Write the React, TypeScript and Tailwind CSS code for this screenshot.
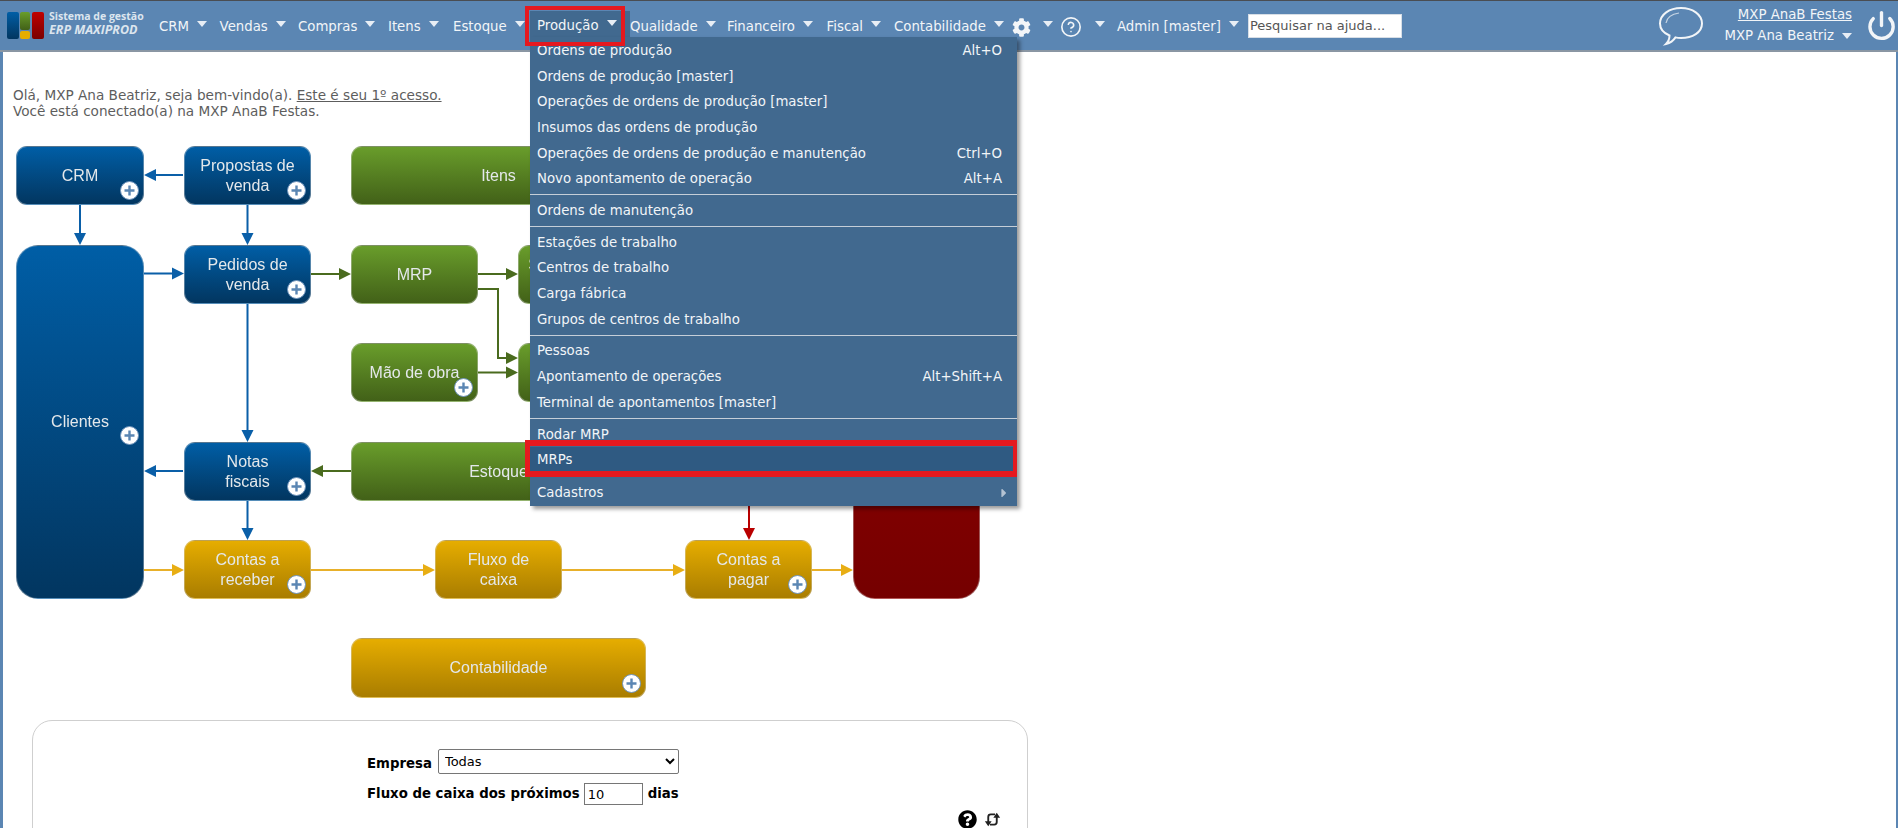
import { FaCog, FaQuestionCircle, FaCaretRight } from "react-icons/fa";
import { CircleHelp, Power } from "lucide-react";

const navItems = [
  { label: "CRM", cls: "w-[60.600px]" },
  { label: "Vendas", cls: "w-[78.400px]" },
  { label: "Compras", cls: "w-[90px]" },
  { label: "Itens", cls: "w-[65px]" },
  { label: "Estoque", cls: "w-[77px]" },
];

const navItemsAfter = [
  { label: "Qualidade", cls: "w-[97px]" },
  { label: "Financeiro", cls: "w-[99.600px]" },
  { label: "Fiscal", cls: "w-[67.400px]" },
  { label: "Contabilidade", cls: "w-[118px]" },
];

type MenuRow = { label: string; shortcut?: string };

const menuGroups: MenuRow[][] = [
  [
    { label: "Ordens de produção", shortcut: "Alt+O" },
    { label: "Ordens de produção [master]" },
    { label: "Operações de ordens de produção [master]" },
    { label: "Insumos das ordens de produção" },
    { label: "Operações de ordens de produção e manutenção", shortcut: "Ctrl+O" },
    { label: "Novo apontamento de operação", shortcut: "Alt+A" },
  ],
  [{ label: "Ordens de manutenção" }],
  [
    { label: "Estações de trabalho" },
    { label: "Centros de trabalho" },
    { label: "Carga fábrica" },
    { label: "Grupos de centros de trabalho" },
  ],
  [
    { label: "Pessoas" },
    { label: "Apontamento de operações", shortcut: "Alt+Shift+A" },
    { label: "Terminal de apontamentos [master]" },
  ],
];

const Caret = () => (
  <span className="mb-[6px] ml-2 inline-block h-0 w-0 border-x-[5px] border-t-[6px] border-x-transparent border-t-[#e8eef5]" />
);

const Plus = ({ cls }: { cls: string }) => (
  <span className={`absolute flex h-[19px] w-[19px] items-center justify-center rounded-full border border-[#6f93bb] bg-white ${cls}`}>
    <svg width="13" height="13" viewBox="0 0 13 13">
      <path d="M6.5 1.5v10M1.5 6.5h10" stroke="#5b86b3" strokeWidth="2.4" />
    </svg>
  </span>
);

const blue = "bg-gradient-to-b from-[#005ea6] to-[#023660]";
const green = "bg-gradient-to-b from-[#699d2b] to-[#426118]";
const orange = "bg-gradient-to-b from-[#e6ad00] to-[#a97d00]";
const red = "bg-gradient-to-b from-[#9a0000] to-[#750000]";

const Box = ({ cls, children }: { cls: string; children?: React.ReactNode }) => (
  <div className={`absolute flex items-center justify-center rounded-[11px] border border-[#d8d8d8]/40 text-center font-['Liberation_Sans',sans-serif] text-[16px] leading-[20px] text-[#e4e8eb] ${cls}`}>
    {children}
  </div>
);

const Arrows = () => (
  <svg className="absolute -left-[3px] top-0" width="1040" height="560" viewBox="0 0 1040 560">
    {/* coordinates relative to the diagram, which starts at page y=140 */}
    <g fill="none" stroke="#0a5fa8" strokeWidth="2">
      <path d="M183 35H150M80 65v34M247.5 65v34M144 133.5h34M247.5 163v133M183 331h-33M247.5 361v33" />
    </g>
    <g fill="#0a5fa8">
      <path d="M144 35l12-6v12zM80 105l-6-12h12zM247.5 105l-6-12h12zM184 133.5l-12-6v12zM247.5 302l-6-12h12zM144 331l12-6v12zM247.5 400l-6-12h12z" />
    </g>
    <g fill="none" stroke="#4a6b1e" strokeWidth="2">
      <path d="M311 134h34M478 134h34M478 149h20v69h14M478 232.500h34M351 331h-34" />
    </g>
    <g fill="#4a6b1e">
      <path d="M351 134l-12-6v12zM518 134l-12-6v12zM518 218l-12-6v12zM518 232.500l-12-6v12zM311 331l12-6v12z" />
    </g>
    <g fill="none" stroke="#e8b02a" strokeWidth="2">
      <path d="M144 430h34M311 430h118M562 430h117M812 430h34" />
    </g>
    <g fill="#e8ae14">
      <path d="M184 430l-12-6v12zM435 430l-12-6v12zM685 430l-12-6v12zM853 430l-12-6v12z" />
    </g>
    <path d="M749 360v34" stroke="#b90000" strokeWidth="2" />
    <path d="M749 400l-6-12h12z" fill="#b90000" />
  </svg>
);

const Diagram = () => (
  <div className="relative mt-[21px] h-[580px] w-[1040px] blur-[0.4px]">
    <Arrows />
    <Box cls={`left-[13px] top-[6px] h-[59px] w-[128px] ${blue}`}>
      CRM
      <Plus cls="bottom-[4px] right-[4px]" />
    </Box>
    <Box cls={`left-[181px] top-[6px] h-[59px] w-[127px] ${blue}`}>
      Propostas de
      <br />
      venda
      <Plus cls="bottom-[4px] right-[4px]" />
    </Box>
    <Box cls={`left-[348px] top-[6px] h-[59px] w-[295px] ${green}`}>Itens</Box>
    <Box cls={`left-[13px] top-[105px] h-[354px] w-[128px] rounded-[22px] ${blue}`}>
      Clientes
      <Plus cls="right-[4px] top-[180px]" />
    </Box>
    <Box cls={`left-[181px] top-[105px] h-[59px] w-[127px] ${blue}`}>
      Pedidos de
      <br />
      venda
      <Plus cls="bottom-[4px] right-[4px]" />
    </Box>
    <Box cls={`left-[348px] top-[105px] h-[59px] w-[127px] ${green}`}>MRP</Box>
    <Box cls={`left-[515px] top-[105px] h-[59px] w-[128px] ${green}`}>
      Solicitações de
      <br />
      compra
    </Box>
    <Box cls={`left-[348px] top-[203px] h-[59px] w-[127px] ${green}`}>
      Mão de obra
      <Plus cls="bottom-[4px] right-[4px]" />
    </Box>
    <Box cls={`left-[515px] top-[203px] h-[59px] w-[128px] ${green}`} />
    <Box cls={`left-[181px] top-[302px] h-[59px] w-[127px] ${blue}`}>
      Notas
      <br />
      fiscais
      <Plus cls="bottom-[4px] right-[4px]" />
    </Box>
    <Box cls={`left-[348px] top-[302px] h-[59px] w-[295px] ${green}`}>Estoque</Box>
    <Box cls={`left-[181px] top-[400px] h-[59px] w-[127px] ${orange}`}>
      Contas a
      <br />
      receber
      <Plus cls="bottom-[4px] right-[4px]" />
    </Box>
    <Box cls={`left-[432px] top-[400px] h-[59px] w-[127px] ${orange}`}>
      Fluxo de
      <br />
      caixa
    </Box>
    <Box cls={`left-[682px] top-[400px] h-[59px] w-[127px] ${orange}`}>
      Contas a
      <br />
      pagar
      <Plus cls="bottom-[4px] right-[4px]" />
    </Box>
    <Box cls={`left-[850px] top-[105px] h-[354px] w-[127px] rounded-[22px] ${red}`} />
    <Box cls={`left-[348px] top-[498px] h-[60px] w-[295px] ${orange}`}>
      Contabilidade
      <Plus cls="bottom-[4px] right-[4px]" />
    </Box>
  </div>
);

const MenuItem = ({ label, shortcut }: MenuRow) => (
  <div className="flex h-[25.7px] items-center justify-between pl-[7px] pr-[15px]">
    <span>{label}</span>
    {shortcut && <span>{shortcut}</span>}
  </div>
);

const ProductionMenu = () => (
  <div className="absolute left-[530px] top-[37px] z-20 w-[487px] bg-[#41698f] pt-[1px] text-[13.300px] text-[#f2f5f8] shadow-[3px_3px_4px_rgba(0,0,0,0.4)]">
    {menuGroups.map((group, i) => (
      <div key={i} className="mb-[3px] border-b border-[#c5ced8] pb-[2px]">
        {group.map((row) => (
          <MenuItem key={row.label} {...row} />
        ))}
      </div>
    ))}
    <MenuItem label="Rodar MRP" />
    <div className="flex h-[24.500px] items-center bg-[#2f5a82] pl-[7px]">MRPs</div>
    <div className="mb-[5px] mt-[2px] border-b border-[#c5ced8]" />
    <div className="flex h-[25.7px] items-center justify-between pl-[7px] pr-[6px]">
      <span>Cadastros</span>
      <FaCaretRight className="text-[#b4c3d3]" size={14} />
    </div>
    {/* red marker around the highlighted row */}
    <div className="absolute -left-[5px] top-[403px] h-[37px] w-[492px] border-y-[6px] border-l-[5px] border-r-[4px] border-[#e5191f]" />
  </div>
);

const TopBar = () => (
  <header className="relative flex h-[52px] items-center border-t border-[#4a4d52] border-b-2 border-b-[#8a96a3] bg-[#5b86b3] text-[13.300px] text-[#f2f5f8]">
    <div className="ml-[7px] flex h-[27px] w-[37px] gap-[1px]">
      <div className="w-[12px] rounded-[2px] bg-gradient-to-b from-[#005ea6] to-[#023660]" />
      <div className="flex w-[11px] flex-col gap-[1px]">
        <div className="flex-1 rounded-[2px] bg-gradient-to-b from-[#699d2b] to-[#426118]" />
        <div className="h-[8px] rounded-[2px] bg-[#e6ad00]" />
      </div>
      <div className="ml-[1px] w-[12px] rounded-[2px] bg-gradient-to-b from-[#c00000] to-[#7a0000]" />
    </div>
    <div className="mb-[5px] ml-[5px] w-[110px] font-['Open_Sans',sans-serif] font-bold leading-[14.500px] text-[#dce5ee]">
      <div className="text-[10.500px]">Sistema de gestão</div>
      <div className="text-[12.500px] italic">ERP MAXIPROD</div>
    </div>
    {navItems.map((item) => (
      <div key={item.label} className={`flex items-center pt-[3px] ${item.cls}`}>
        {item.label}
        <Caret />
      </div>
    ))}
    <div className="mt-[10px] flex h-[27px] w-[100px] items-center self-start bg-[#41698f] pl-[7px] pt-[3px]">
      Produção
      <Caret />
    </div>
    {navItemsAfter.map((item) => (
      <div key={item.label} className={`flex items-center pt-[3px] ${item.cls}`}>
        {item.label}
        <Caret />
      </div>
    ))}
    <div className="flex w-[48px] items-center pt-[3px]">
      <FaCog size={19} />
      <span className="ml-[4px] flex">
        <Caret />
      </span>
    </div>
    <div className="flex w-[57px] items-center pt-[3px]">
      <CircleHelp size={22} strokeWidth={1.8} />
      <span className="ml-[5px] flex">
        <Caret />
      </span>
    </div>
    <div className="flex w-[131px] items-center pt-[3px]">
      Admin [master]
      <Caret />
    </div>
    <input
      readOnly
      placeholder="Pesquisar na ajuda..."
      className="h-[24px] w-[154px] border border-[#d7dee6] bg-white pl-[1px] text-[13px] text-black placeholder:text-[#555]"
    />
    <div className="ml-auto flex items-center">
      <svg width="46" height="42" viewBox="0 0 46 42" fill="none" stroke="#f2f5f8" strokeWidth="2">
        <path d="M23 3c11.500 0 21 6.500 21 15.500S34.500 33 23 33c-2 0-4-.2-5.500-.6C15.500 35.500 12 38 8 39c2-2 3.500-5 3.500-8.500C5.500 28 2 24 2 18.500 2 9.500 11.500 3 23 3z" />
        <path d="M8 18c1-6 6-9 13-10" strokeWidth="1.200" opacity="0.7" />
      </svg>
      <div className="ml-[20px] flex flex-col items-end gap-[4px] leading-[16px]">
        <span className="underline">MXP AnaB Festas</span>
        <span className="flex items-center">
          MXP Ana Beatriz
          <span className="mt-[6px] flex">
            <Caret />
          </span>
        </span>
      </div>
      <Power className="ml-[14px] mr-[1px]" size={31} strokeWidth={2.6} />
    </div>
    {/* red marker around the open menu */}
    <div className="absolute left-[525px] top-[5px] z-30 h-[40px] w-[100px] border-[4.500px] border-[#e5191f]" />
  </header>
);

const SyncIcon = () => (
  <svg width="17" height="17" viewBox="0 0 18 20" fill="none" stroke="#222" strokeWidth="2.2">
    <path d="M12 4H7a3 3 0 0 0-3 3v6M6 16h5a3 3 0 0 0 3-3V7" />
    <path d="M0 12h8l-4 6zM10 8h8l-4-6z" fill="#222" stroke="none" />
  </svg>
);

const CashFlowPanel = () => (
  <div className="ml-[29px] h-[140px] w-[996px] rounded-t-[20px] border border-[#cfcfcf] bg-white text-[13.300px] text-black">
    <div className="ml-[334px] mt-[28px] flex items-center gap-[6px] font-bold">
      <span className="pt-[5px]">Empresa</span>
      <select className="h-[25px] w-[241px] rounded-[2px] border border-[#767676] bg-white px-[2px] text-[13px] font-normal">
        <option>Todas</option>
      </select>
    </div>
    <div className="ml-[334px] mt-[9px] flex items-center gap-[4px] font-bold">
      Fluxo de caixa dos próximos
      <input
        readOnly
        value="10"
        className="h-[22px] w-[59px] border border-[#767676] bg-white px-[3px] text-[13px] font-normal"
      />
      <span className="ml-[1px]">dias</span>
    </div>
    <div className="mr-[26px] mt-[5px] flex items-center justify-end gap-[7px]">
      <FaQuestionCircle size={19} />
      <SyncIcon />
    </div>
  </div>
);

export default function App() {
  return (
    <div className="relative h-[828px] w-full overflow-hidden bg-[#5b86b3] font-['DejaVu_Sans',Verdana,sans-serif]">
      <TopBar />
      <ProductionMenu />
      <div className="ml-[3px] mr-[2px] h-[776px] bg-white">
        <div className="pl-[10px] pt-[35px] text-[13.600px] leading-[16px] text-[#5d5d5d]">
          Olá, MXP Ana Beatriz, seja bem-vindo(a). <span className="underline">Este é seu 1º acesso.</span>
          <br />
          Você está conectado(a) na MXP AnaB Festas.
        </div>
        <Diagram />
        <CashFlowPanel />
      </div>
    </div>
  );
}
